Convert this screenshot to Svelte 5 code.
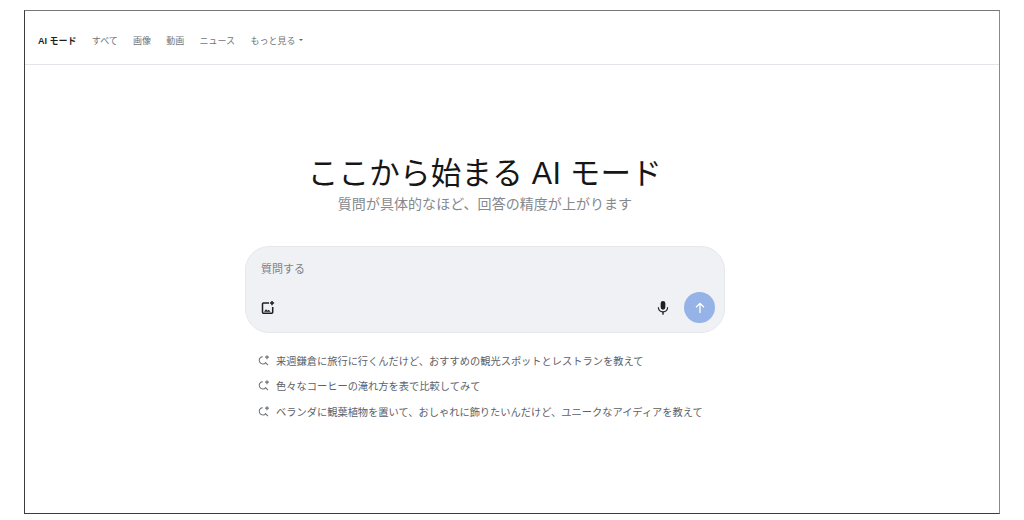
<script lang="ts">
	const tabs = ['すべて', '画像', '動画', 'ニュース'];
	const suggestions = [
		'来週鎌倉に旅行に行くんだけど、おすすめの観光スポットとレストランを教えて',
		'色々なコーヒーの淹れ方を表で比較してみて',
		'ベランダに観葉植物を置いて、おしゃれに飾りたいんだけど、ユニークなアイディアを教えて'
	];
</script>

<div class="page">
	<div class="frame">
		<nav class="nav">
			<span class="tab active">AI モード</span>
			{#each tabs as tab}
				<span class="tab">{tab}</span>
			{/each}
			<span class="tab more">もっと見る<span class="caret"></span></span>
		</nav>

		<main class="main">
			<h1 class="title">ここから始まる AI モード</h1>
			<p class="subtitle">質問が具体的なほど、回答の精度が上がります</p>

			<div class="composer">
				<div class="placeholder">質問する</div>
				<div class="tools">
					<svg class="add-image" width="16" height="16" viewBox="0 0 16 16" fill="none" stroke="#1f1f1f" stroke-width="1.5">
						<path d="M8 3H2.4a.9.9 0 0 0-.9.9v8.4a.9.9 0 0 0 .9.9h8.4a.9.9 0 0 0 .9-.9V7" />
						<path d="M3 11.7l2-2.4 1.5 1.5 1.2-1.1 1.9 2z" fill="#1f1f1f" stroke="none" />
						<path d="M11 1v4.2M8.9 3.1h4.2" stroke-width="1.5" />
					</svg>
					<div class="tools-right">
						<svg width="16" height="16" viewBox="0 0 24 24" fill="#1f1f1f">
							<path d="M12 14.5a3.5 3.5 0 0 0 3.5-3.5V5a3.5 3.5 0 0 0-7 0v6a3.5 3.5 0 0 0 3.5 3.5z" />
							<path d="M18 11a6 6 0 0 1-12 0H4.2a7.8 7.8 0 0 0 6.8 7.7V22h2v-3.3a7.8 7.8 0 0 0 6.8-7.7z" />
						</svg>
						<button class="send" aria-label="送信">
							<svg width="14" height="14" viewBox="0 0 14 14" fill="none" stroke="#fff" stroke-width="1.3">
								<path d="M7 12V2.5M3 6.3l4-4 4 4" />
							</svg>
						</button>
					</div>
				</div>
			</div>

			<ul class="suggestions">
				{#each suggestions as text}
					<li>
						<svg width="13" height="13" viewBox="0 0 13 13" fill="none" stroke="#70757a" stroke-width="1.1">
							<path d="M5.6 2.6a3.7 3.7 0 1 0 3.2 6" />
							<path d="M8.2 8.4l2.8 2.8" />
							<path d="M10 1.2v4M8 3.2h4" stroke-width="1.2" />
						</svg>
						<span>{text}</span>
					</li>
				{/each}
			</ul>
		</main>
	</div>
</div>

<style>
	:global(body) {
		margin: 0;
		background: #fff;
	}

	.page {
		width: 1024px;
		height: 520px;
		padding: 10px 24px 6px;
		box-sizing: border-box;
		font-family: 'Liberation Sans', 'Noto Sans CJK JP', sans-serif;
	}

	.frame {
		height: 100%;
		box-sizing: border-box;
		border: 1px solid #3c3c3c;
		border-right-color: #8a8a8a;
		border-top-color: #777;
		display: flex;
		flex-direction: column;
	}

	.nav {
		height: 54px;
		flex: none;
		box-sizing: border-box;
		border-bottom: 1px solid #e3e5ea;
		padding: 5px 0 0 13px;
		display: flex;
		align-items: center;
		gap: 15.25px;
		font-size: 9px;
	}

	.tab {
		color: #70757a;
		white-space: nowrap;
	}

	.tab.active {
		color: #1f1f1f;
		font-weight: 700;
	}

	.more {
		display: flex;
		align-items: center;
		gap: 4px;
	}

	.caret {
		width: 0;
		height: 0;
		border-left: 2px solid transparent;
		border-right: 2px solid transparent;
		border-top: 2.5px solid #5f6368;
	}

	.main {
		flex: 1;
		display: flex;
		flex-direction: column;
		align-items: center;
		padding: 88px 54px 0 0;
	}

	.title {
		margin: 0;
		font-size: 30.5px;
		line-height: 40px;
		font-weight: 400;
		color: #161616;
		letter-spacing: 0.25px;
	}

	.subtitle {
		margin: 1px 0 0;
		font-size: 14px;
		line-height: 20px;
		letter-spacing: 0.05px;
		color: #85888d;
	}

	.composer {
		width: 480px;
		height: 87px;
		margin-top: 32px;
		box-sizing: border-box;
		background: #f0f1f5;
		border: 1px solid #e6e8ed;
		border-radius: 24px;
		padding: 14px 9px 9px 15px;
		display: flex;
		flex-direction: column;
		justify-content: space-between;
	}

	.placeholder {
		font-size: 11px;
		line-height: 16px;
		color: #7d8186;
	}

	.tools {
		display: flex;
		align-items: center;
		justify-content: space-between;
	}

	.tools-right {
		display: flex;
		align-items: center;
		gap: 13px;
	}

	.send {
		width: 31px;
		height: 31px;
		border: none;
		border-radius: 50%;
		padding: 0;
		background: #95b3e6;
		display: flex;
		align-items: center;
		justify-content: center;
	}

	.suggestions {
		list-style: none;
		width: 480px;
		box-sizing: border-box;
		margin: 19px 0 0;
		padding: 0 0 0 12px;
		display: flex;
		flex-direction: column;
		gap: 9.5px;
	}

	.suggestions li {
		display: flex;
		align-items: center;
		gap: 6px;
		height: 16px;
		font-size: 10.24px;
		color: #5d6168;
		white-space: nowrap;
	}
</style>
